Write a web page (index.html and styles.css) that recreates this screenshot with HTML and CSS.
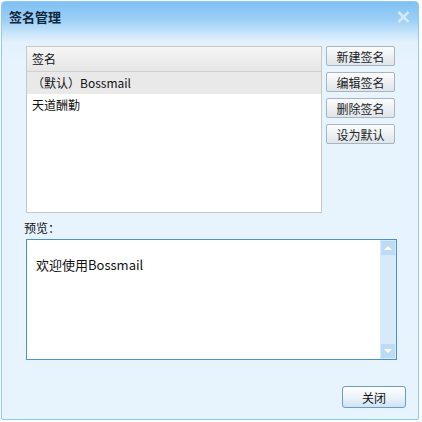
FILE: index.html
```html
<!DOCTYPE html>
<html lang="zh-CN">
<head>
  <meta charset="UTF-8">
  <title>签名管理</title>
  <link rel="stylesheet" href="styles.css">
</head>
<body>
  <div class="dialog">
    <div class="dialog-title">
      <span>签名管理</span>
      <svg class="close-x" width="13" height="12" viewBox="0 0 13 12">
        <path d="M1.5 1 L11.5 11 M11.5 1 L1.5 11" stroke="#d3e9f9" stroke-width="2.6" fill="none"/>
      </svg>
    </div>
    <div class="dialog-body">
      <div class="sig-row">
        <div class="sig-list">
          <div class="sig-head">签名</div>
          <div class="sig-item selected">（默认）Bossmail</div>
          <div class="sig-item">天道酬勤</div>
        </div>
        <div class="sig-buttons">
          <button class="btn">新建签名</button>
          <button class="btn">编辑签名</button>
          <button class="btn">删除签名</button>
          <button class="btn">设为默认</button>
        </div>
      </div>
      <div class="preview-label">预览：</div>
      <div class="preview">
        <div class="preview-text">欢迎使用Bossmail</div>
        <div class="scrollbar">
          <div class="arrow up"></div>
          <div class="arrow down"></div>
        </div>
      </div>
      <div class="footer">
        <button class="btn-close">关闭</button>
      </div>
    </div>
  </div>
</body>
</html>
```

FILE: styles.css
```css
body { margin: 0; background: #fff; font-family: "Noto Sans CJK SC", "Liberation Sans", sans-serif; font-size: 12px; color: #111; }
.dialog { margin: 1px 0 0 1px; width: 416px; height: 417px; border: 1px solid #8fcaf2; border-radius: 4px 4px 2px 2px; background: linear-gradient(#7fc1f3 0px, #9ccff6 18px, #c4e3fa 30px, #e2f1fc 40px, #e7f4fd 60px); display: flex; flex-direction: column; }
.dialog-title { height: 29px; display: flex; align-items: center; justify-content: space-between; padding: 0 8px 0 7px; font-size: 13px; font-weight: bold; color: #10263a; }
.close-x { margin-top: 1px; }
.dialog-body { padding: 15px 12px 0 22px; }
.sig-row { display: flex; gap: 4px; margin-left: 2px; }
.sig-list { width: 294px; height: 165px; border: 1px solid #c8c8c8; background: #fff; }
.sig-head { height: 24px; line-height: 24px; padding-left: 5px; border-bottom: 1px solid #d0d0d0; background: linear-gradient(#f6f6f6, #e6e6e6); }
.sig-item { height: 22px; line-height: 22px; padding-left: 5px; }
.sig-item.selected { background: #e9e9e9; }
.sig-buttons { display: flex; flex-direction: column; gap: 6px; }
.btn { width: 69px; height: 20px; padding: 0; font-family: inherit; font-size: 12px; color: #222; border: 1px solid #a9b4be; border-radius: 2px; background: linear-gradient(#fbfcfd, #dfe5ea); }
.preview-label { margin-top: 6px; height: 20px; line-height: 18px; }
.preview { width: 369px; height: 119px; margin-left: 2px; border: 1px solid #4b92c9; background: #fff; display: flex; justify-content: space-between; }
.preview-text { padding: 15px 0 0 9px; font-size: 13px; }
.scrollbar { width: 16px; background: #d6eaf9; display: flex; flex-direction: column; justify-content: space-between; }
.arrow { height: 16px; background: #bcdcf5; border: 1px solid #d6ebfa; box-sizing: border-box; position: relative; }
.arrow::after { content: ""; position: absolute; left: 3px; border-left: 4px solid transparent; border-right: 4px solid transparent; }
.arrow.up::after { top: 5px; border-bottom: 4px solid #fff; }
.arrow.down::after { top: 5px; border-top: 4px solid #fff; }
.footer { display: flex; justify-content: flex-end; margin-top: 26px; }
.btn-close { width: 64px; height: 22px; padding: 0; font-family: inherit; font-size: 12px; color: #111; border: 1px solid #6d9cc3; border-radius: 3px; background: linear-gradient(#ffffff, #e9f2f9 55%, #cfe3f3); }
```
